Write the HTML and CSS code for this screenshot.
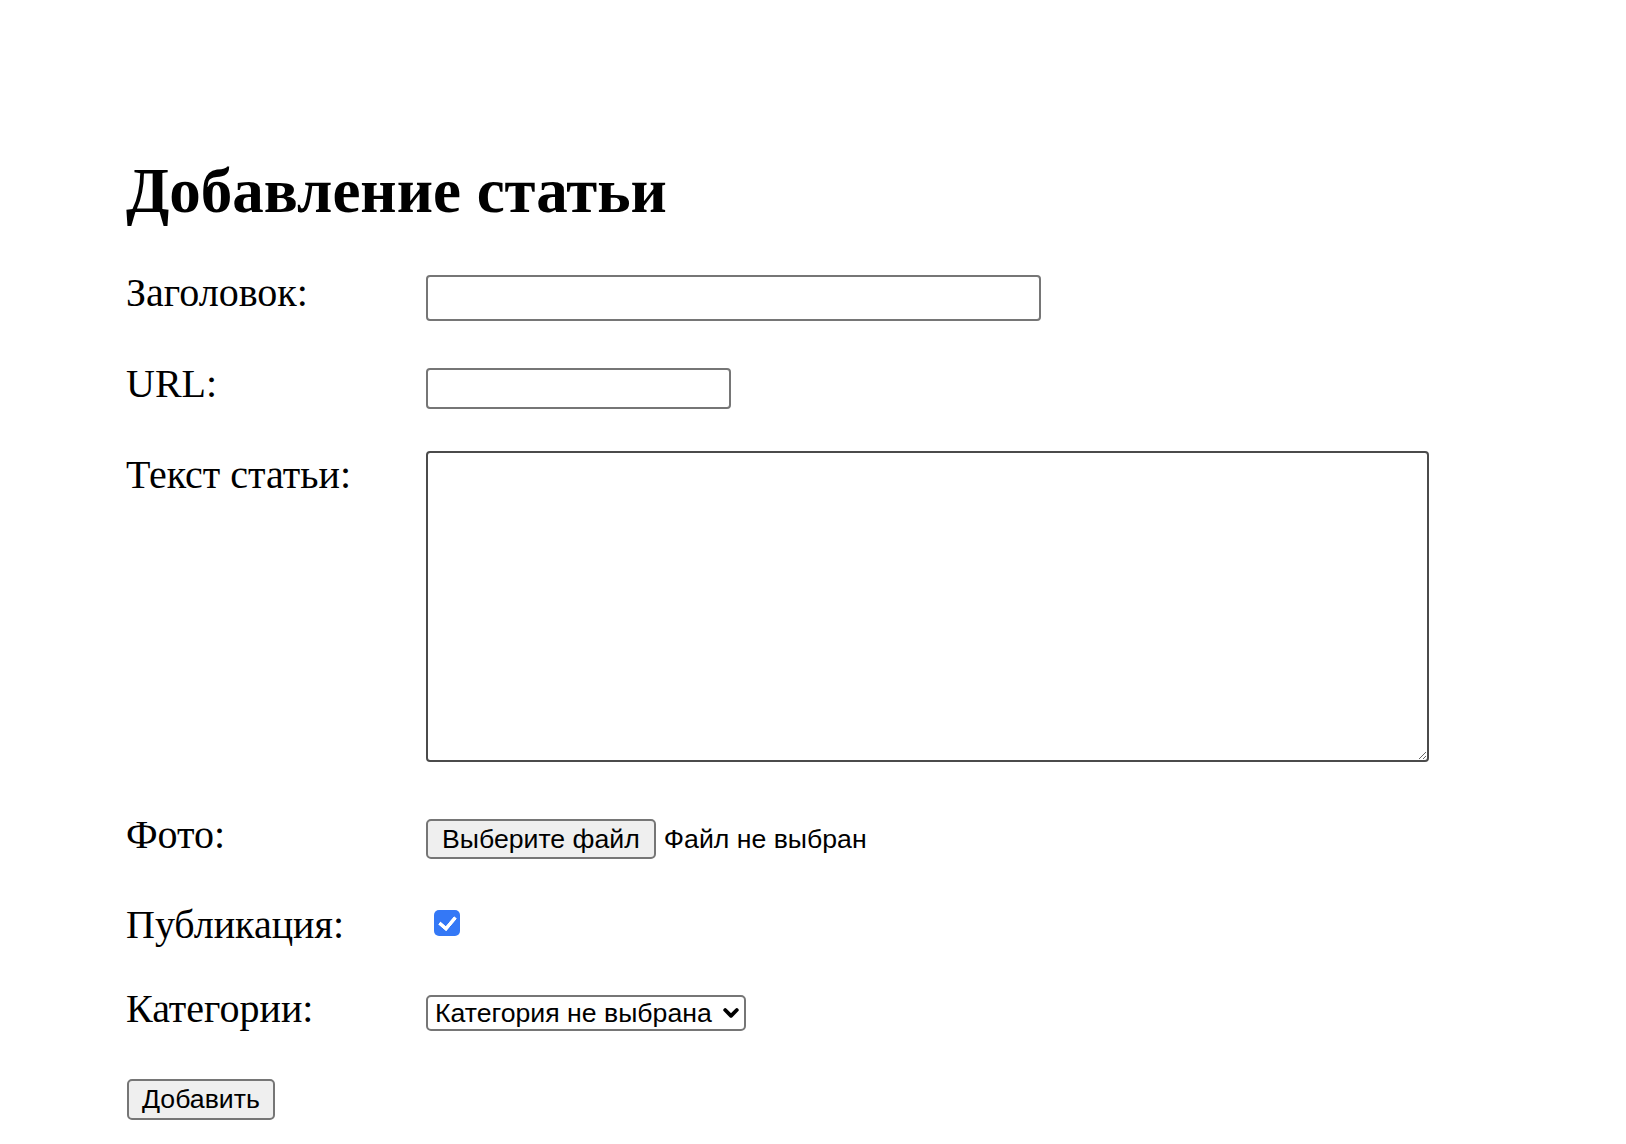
FILE: index.html
```html
<!DOCTYPE html>
<html lang="ru">
<head>
<meta charset="utf-8">
<title>Добавление статьи</title>
<link rel="stylesheet" href="styles.css">
</head>
<body>
<div class="page">
  <h1 class="title">Добавление статьи</h1>
  <form class="form">
    <div class="row row-title">
      <label class="label" for="id_title">Заголовок:</label>
      <input class="field field-title" type="text" id="id_title">
    </div>
    <div class="row row-url">
      <label class="label" for="id_slug">URL:</label>
      <input class="field field-url" type="text" id="id_slug">
    </div>
    <div class="row row-text">
      <label class="label" for="id_content">Текст статьи:</label>
      <textarea class="area" id="id_content"></textarea>
    </div>
    <div class="row row-photo">
      <label class="label">Фото:</label>
      <span class="file">
        <button type="button" class="btn">Выберите файл</button>
        <span class="file-name">Файл не выбран</span>
      </span>
    </div>
    <div class="row row-pub">
      <label class="label" for="id_is_published">Публикация:</label>
      <input class="check" type="checkbox" id="id_is_published" checked>
    </div>
    <div class="row row-cat">
      <label class="label" for="id_cat">Категории:</label>
      <span class="select-wrap">
        <select class="select" id="id_cat">
          <option>Категория не выбрана</option>
        </select>
        <svg class="chevron" width="16" height="12" viewBox="0 0 16 12"><path d="M2.2 3 L8 8.8 L13.8 3" fill="none" stroke="#000" stroke-width="3.8" stroke-linecap="round" stroke-linejoin="round"/></svg>
      </span>
    </div>
    <div class="row row-submit">
      <button type="submit" class="btn btn-submit">Добавить</button>
    </div>
  </form>
</div>
</body>
</html>
```

FILE: styles.css
```css
html, body {
  margin: 0;
  padding: 0;
  background: #fff;
  color: #000;
}

body {
  font-family: "Liberation Serif", "Times New Roman", serif;
}

.page {
  padding: 155px 0 40px 126px;
}

.title {
  margin: 0;
  font-size: 63px;
  font-weight: bold;
  line-height: normal;
}

.form {
  margin: 0;
}

.row {
  display: flex;
  align-items: baseline;
}

.label {
  flex: 0 0 300px;
  font-size: 40px;
  line-height: normal;
}

.row-title { margin-top: 41px; }
.row-url { margin-top: 39px; }
.row-text { margin-top: 42px; align-items: flex-start; }
.row-photo { margin-top: 49px; }
.row-pub { margin-top: 42px; align-items: flex-start; }
.row-cat { margin-top: 37px; }
.row-submit { margin-top: 47px; }

.field,
.area,
.select,
.btn,
.file-name {
  font-family: "Liberation Sans", Arial, sans-serif;
  font-size: 26.67px;
  color: #000;
}

.field {
  box-sizing: border-box;
  border: 2px solid #767676;
  border-radius: 4px;
  background: #fff;
  margin: 0;
  line-height: normal;
  padding: 0 4px;
  outline: none;
}

.field-title {
  width: 615px;
  height: 46px;
}

.field-url {
  width: 305px;
  height: 41px;
}

.area {
  box-sizing: border-box;
  width: 1003px;
  height: 311px;
  margin: 0;
  border: 2px solid #4b4b4b;
  border-radius: 4px;
  padding: 4px;
  resize: both;
  background: #fff;
  display: block;
}

.file {
  display: inline-flex;
  align-items: baseline;
  gap: 8px;
}

.btn {
  box-sizing: border-box;
  height: 40px;
  margin: 0;
  padding: 0 14px;
  background: #efefef;
  border: 2px solid #767676;
  border-radius: 5px;
  line-height: normal;
  cursor: pointer;
}

.btn-submit {
  height: 41px;
  padding: 0 13px;
  margin-left: 1px;
}

.check {
  appearance: none;
  -webkit-appearance: none;
  position: relative;
  box-sizing: border-box;
  width: 26px;
  height: 26px;
  margin: 9px 0 0 8px;
  background: #3478f6;
  border: none;
  border-radius: 5px;
}

.check::after {
  content: "";
  position: absolute;
  left: 8px;
  top: 3px;
  width: 7px;
  height: 13px;
  border-right: 4.5px solid #fff;
  border-bottom: 4.5px solid #fff;
  transform: rotate(40deg);
  border-radius: 1px;
}

.select-wrap {
  position: relative;
  display: inline-block;
}

.select {
  appearance: none;
  -webkit-appearance: none;
  box-sizing: border-box;
  width: 320px;
  height: 36px;
  margin: 0;
  padding: 0 26px 0 7px;
  border: 2px solid #767676;
  border-radius: 5px;
  background: #fff;
  line-height: normal;
}

.chevron {
  position: absolute;
  right: 7px;
  top: 12px;
  pointer-events: none;
}
```
